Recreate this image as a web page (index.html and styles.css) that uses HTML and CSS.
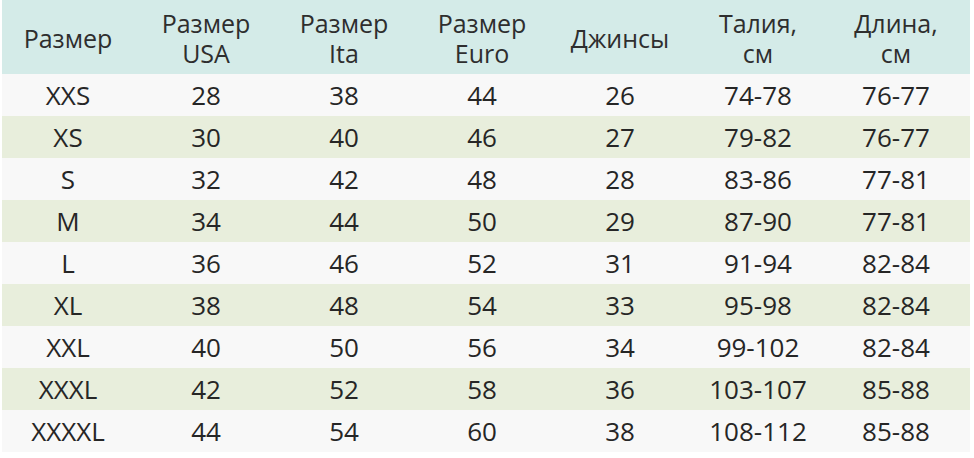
FILE: index.html
```html
<!DOCTYPE html>
<html lang="ru">
<head>
<meta charset="utf-8">
<title>Таблица размеров</title>
<link rel="stylesheet" href="styles.css">
</head>
<body>
<div class="table">
  <div class="row head">
    <div class="cell">Размер</div>
    <div class="cell">Размер<br>USA</div>
    <div class="cell">Размер<br>Ita</div>
    <div class="cell">Размер<br>Euro</div>
    <div class="cell">Джинсы</div>
    <div class="cell">Талия,<br>см</div>
    <div class="cell">Длина,<br>см</div>
  </div>
  <div class="row light"><div class="cell">XXS</div><div class="cell">28</div><div class="cell">38</div><div class="cell">44</div><div class="cell">26</div><div class="cell">74-78</div><div class="cell">76-77</div></div>
  <div class="row green"><div class="cell">XS</div><div class="cell">30</div><div class="cell">40</div><div class="cell">46</div><div class="cell">27</div><div class="cell">79-82</div><div class="cell">76-77</div></div>
  <div class="row light"><div class="cell">S</div><div class="cell">32</div><div class="cell">42</div><div class="cell">48</div><div class="cell">28</div><div class="cell">83-86</div><div class="cell">77-81</div></div>
  <div class="row green"><div class="cell">M</div><div class="cell">34</div><div class="cell">44</div><div class="cell">50</div><div class="cell">29</div><div class="cell">87-90</div><div class="cell">77-81</div></div>
  <div class="row light"><div class="cell">L</div><div class="cell">36</div><div class="cell">46</div><div class="cell">52</div><div class="cell">31</div><div class="cell">91-94</div><div class="cell">82-84</div></div>
  <div class="row green"><div class="cell">XL</div><div class="cell">38</div><div class="cell">48</div><div class="cell">54</div><div class="cell">33</div><div class="cell">95-98</div><div class="cell">82-84</div></div>
  <div class="row light"><div class="cell">XXL</div><div class="cell">40</div><div class="cell">50</div><div class="cell">56</div><div class="cell">34</div><div class="cell">99-102</div><div class="cell">82-84</div></div>
  <div class="row green"><div class="cell">XXXL</div><div class="cell">42</div><div class="cell">52</div><div class="cell">58</div><div class="cell">36</div><div class="cell">103-107</div><div class="cell">85-88</div></div>
  <div class="row light"><div class="cell">XXXXL</div><div class="cell">44</div><div class="cell">54</div><div class="cell">60</div><div class="cell">38</div><div class="cell">108-112</div><div class="cell">85-88</div></div>
</div>
</body>
</html>
```
FILE: styles.css
```css
html, body {
  margin: 0;
  padding: 0;
  background: #ffffff;
}
body {
  font-family: "Open Sans", "Noto Sans", sans-serif;
  color: #262626;
}
.table {
  width: 968px;
  margin-left: 2px;
}
.row {
  display: grid;
  grid-template-columns: 135px repeat(5, 138px) 143px;
  height: 42px;
  align-items: center;
  font-size: 26px;
}
.row .cell {
  text-align: center;
  line-height: 30px;
}
.row .cell:first-child {
  padding-right: 3px;
}
.row .cell:last-child {
  padding-right: 5px;
}
.head {
  height: 74px;
  background: #d4ebe8;
  color: #2e2e2e;
  font-size: 25px;
}
.head .cell {
  line-height: 30px;
  padding-top: 2px;
}
.light {
  background: #f8f8f8;
}
.green {
  background: #e8eedc;
}
```
